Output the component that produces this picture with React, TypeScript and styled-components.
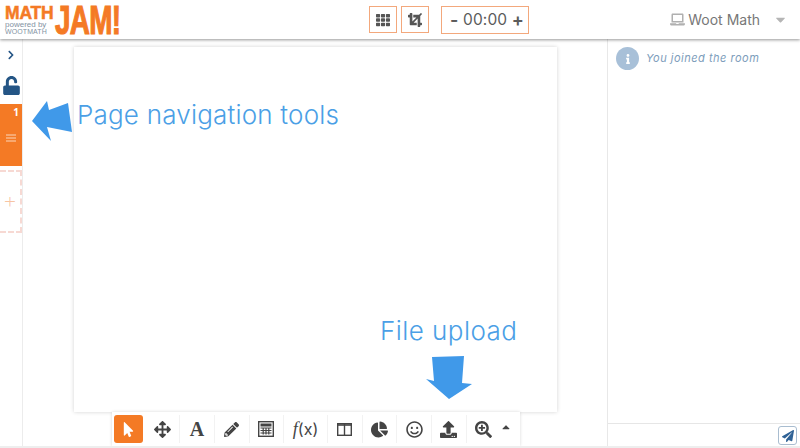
import React from "react";
import styled, { createGlobalStyle } from "styled-components";
import {
  FaArrowsAlt, FaCaretDown, FaCaretUp, FaChartPie, FaChevronRight, FaCrop,
  FaInfo, FaLaptop, FaMousePointer, FaPaperPlane, FaPencilAlt, FaRegSmile, FaSearchPlus,
  FaTh, FaUnlock, FaUpload,
} from "react-icons/fa";

const Global = createGlobalStyle`
  html, body { margin: 0; padding: 0; background: #fff; }
  body { font-family: "Inter", "Liberation Sans", sans-serif; overflow: hidden; }
`;

const Shell = styled.div`
  position: relative;
  width: 800px;
  height: 448px;
  display: flex;
  flex-direction: column;
  box-sizing: border-box;
  overflow: hidden;
  background: #fff;
  border-bottom: 2px solid #eeeeee;
`;

const Header = styled.header`
  position: relative;
  z-index: 3;
  flex: 0 0 39px;
  min-height: 0;
  height: 39px;
  display: flex;
  align-items: flex-start;
  background: #fff;
  box-shadow: 0 1px 3px rgba(0, 0, 0, 0.42);
`;

const Logo = styled.div`
  flex: 0 0 369px;
  height: 39px;
  display: flex;
  align-items: flex-start;
  box-sizing: border-box;
  padding: 5px 0 0 5px;
  color: #f47a25;
`;

const LogoLeft = styled.div`
  display: flex;
  flex-direction: column;
  width: 50px;
`;

const LogoMath = styled.span`
  font: 900 17.5px/15px "Liberation Sans", sans-serif;
  letter-spacing: -0.2px;
  margin-top: 1px;
  -webkit-text-stroke: 0.5px #f47a25;
`;

const LogoPowered = styled.span`
  font: 400 8px/7px "Liberation Sans", sans-serif;
  height: 7px;
  color: #8493a3;
`;

const LogoMaker = styled.span`
  font: 400 7px/7px "Liberation Sans", sans-serif;
  height: 7px;
  color: #8493a3;
  letter-spacing: 0.1px;
`;

const LogoJam = styled.span`
  display: block;
  font: 900 41px/47px "Liberation Sans", sans-serif;
  letter-spacing: -1px;
  margin-top: -8.5px;
  transform: scaleX(0.68);
  transform-origin: left top;
  white-space: nowrap;
  -webkit-text-stroke: 1.2px #f47a25;
`;

const Center = styled.div`
  flex: 0 0 auto;
  display: flex;
  align-items: flex-start;
  padding-top: 6px;
`;

const OutlineButton = styled.button<{ $gap: number }>`
  display: flex;
  align-items: center;
  justify-content: center;
  box-sizing: border-box;
  width: 28px;
  height: 27px;
  margin-right: ${(p) => p.$gap}px;
  padding: 0;
  background: #fff;
  border: 1px solid #f3a87c;
  color: #555;
  font-size: 14px;
`;

const Timer = styled.div`
  display: flex;
  align-items: center;
  justify-content: space-between;
  box-sizing: border-box;
  width: 88px;
  height: 28px;
  padding: 0 4px 0 8px;
  border: 1px solid #f3a87c;
  color: #5b5b5b;
  font: 400 15.5px/1 "Inter", sans-serif;
  letter-spacing: 0.1px;
`;

const TimerSign = styled.span`
  font-weight: 600;
  font-size: 18px;
`;

const User = styled.div`
  margin-left: auto;
  display: flex;
  align-items: center;
  height: 39px;
  padding-right: 12px;
  color: #777;
  font: 400 14px/1 "Inter", sans-serif;
`;

const UserLaptop = styled.span`
  display: flex;
  color: #b0b0b0;
  font-size: 15px;
  margin-right: 3px;
`;

const UserCaret = styled.span`
  display: flex;
  color: #b5b5b5;
  font-size: 15px;
  margin-left: 13px;
`;

const Body = styled.div`
  flex: 1;
  display: flex;
  min-height: 0;
`;

const Rail = styled.aside`
  flex: 0 0 22px;
  display: flex;
  flex-direction: column;
  align-items: stretch;
  border-right: 1px solid #ececec;
`;

const RailToggle = styled.div`
  display: flex;
  justify-content: center;
  padding-top: 11px;
  height: 26px;
  color: #245585;
  font-size: 10px;
`;

const RailLock = styled.div`
  display: flex;
  justify-content: center;
  height: 28px;
  color: #245585;
  font-size: 19px;
`;

const PageThumb = styled.div`
  position: relative;
  height: 62px;
  background: #f47a25;
  display: flex;
  align-items: center;
  justify-content: center;
  box-sizing: border-box;
  color: #fff;
`;

const PageNumber = styled.span`
  position: absolute;
  top: 2px;
  right: 3px;
  font: 700 10px/12px "Open Sans", sans-serif;
`;

const Lines = styled.svg`
  width: 10px;
  height: 8px;
  margin-top: 5px;
`;

const AddPage = styled.div`
  margin-top: 4px;
  height: 63px;
  box-sizing: border-box;
  border: 2px dashed #f7d9d3;
  border-left: none;
  display: flex;
  align-items: center;
  justify-content: center;
  color: #f7c4a3;
  font: 300 21px/1 "Open Sans", sans-serif;
`;

const Stage = styled.main`
  flex: 1;
  display: flex;
  flex-direction: column;
  align-items: flex-start;
  min-width: 0;
`;

const Page = styled.section`
  flex: 1;
  width: 483px;
  margin: 8px 0 0 51px;
  background: #fff;
  box-shadow: 0 0 4px rgba(0, 0, 0, 0.18);
`;

const Toolbar = styled.nav`
  position: relative;
  flex: 0 0 34px;
  display: flex;
  align-items: center;
  box-sizing: border-box;
  margin-left: 89px;
  width: 408px;
  padding-left: 2px;
  background: #fff;
  box-shadow: 0 0 3px rgba(0, 0, 0, 0.16);
  color: #444;
`;

const Tool = styled.button<{ $active?: boolean; $wide?: boolean; $last?: boolean }>`
  flex: 0 0 ${(p) => (p.$active ? "29px" : p.$wide ? "43.6px" : "34.7px")};
  height: 28px;
  margin-right: ${(p) => (p.$active ? "2.5px" : "0")};
  padding: 0;
  display: flex;
  align-items: center;
  justify-content: center;
  font-size: 17px;
  border: none;
  border-right: ${(p) => (p.$active || p.$last ? "none" : "1px solid #f2f2f2")};
  border-radius: ${(p) => (p.$active ? "3px" : "0")};
  background: ${(p) => (p.$active ? "#f47a25" : "#fff")};
  color: ${(p) => (p.$active ? "#fff" : "#444")};
`;

const SerifGlyph = styled.span`
  font: 700 20px/1 "Liberation Serif", serif;
  color: #444;
`;

const FxLabel = styled.span`
  font: 400 16px/1 "Inter", sans-serif;
  color: #444;
`;

const FxItalic = styled.i`
  font: italic 400 18px/1 "Liberation Serif", serif;
`;

const Caret = styled.span`
  display: flex;
  font-size: 12px;
  margin: -4px 0 0 -1px;
  color: #444;
`;

const Chat = styled.aside`
  flex: 0 0 193px;
  display: flex;
  flex-direction: column;
  border-left: 1px solid #e8e8e8;
  box-sizing: border-box;
`;

const ChatLog = styled.div`
  flex: 1;
  padding: 8px 0 0 8px;
`;

const Notice = styled.div`
  display: flex;
  align-items: center;
  gap: 7px;
  color: #7d9dbb;
  font: italic 400 11px/1 "Inter", sans-serif;
  letter-spacing: 0.5px;
`;

const InfoDot = styled.span`
  display: flex;
  align-items: center;
  justify-content: center;
  width: 23px;
  height: 23px;
  border-radius: 50%;
  background: #a8c0d8;
  color: #fff;
  font-size: 10px;
`;

const Composer = styled.div`
  flex: 0 0 23px;
  display: flex;
  box-sizing: border-box;
  justify-content: flex-end;
  align-items: flex-start;
  padding: 2px 3px 0 0;
  border-top: 1px solid #e6e6e6;
`;

const Send = styled.button`
  display: flex;
  align-items: center;
  justify-content: center;
  box-sizing: border-box;
  width: 19px;
  height: 19px;
  padding: 0;
  background: #fff;
  border: 1.5px solid #a9bdd0;
  border-radius: 3px;
  color: #2f6296;
  font-size: 12px;
`;

const Callout = styled.span<{ $x: number; $y: number; $track: number }>`
  position: absolute;
  left: ${(p) => p.$x}px;
  top: ${(p) => p.$y}px;
  color: #4b9fe6;
  font: 300 26px/32px "Inter", sans-serif;
  letter-spacing: ${(p) => p.$track}px;
  white-space: nowrap;
  z-index: 4;
`;

const CalloutArrow = styled.svg<{ $x: number; $y: number }>`
  position: absolute;
  left: ${(p) => p.$x}px;
  top: ${(p) => p.$y}px;
  z-index: 4;
`;

const CalcIcon = () => (
  <svg width="16" height="16" viewBox="0 0 16 16">
    <rect x="0.7" y="0.7" width="14.6" height="14.6" fill="none" stroke="#444" strokeWidth="1.4" />
    <rect x="2.5" y="2.5" width="11" height="3" fill="#444" />
    <path d="M2.5 7h11M2.5 9.5h11M2.5 12h11M5.2 7v6.5M8 7v6.5M10.8 7v6.5" stroke="#444" strokeWidth="1.2" />
  </svg>
);

const SplitIcon = () => (
  <svg width="15" height="13" viewBox="0 0 15 13">
    <rect x="0.7" y="0.7" width="13.6" height="11.6" fill="none" stroke="#444" strokeWidth="1.4" />
    <path d="M0 2h15" stroke="#444" strokeWidth="1.6" />
    <path d="M7.5 1v11" stroke="#444" strokeWidth="1.4" />
  </svg>
);

export default function App() {
  return (
    <Shell>
      <Global />
      <Header>
        <Logo>
          <LogoLeft>
            <LogoMath>MATH</LogoMath>
            <LogoPowered>powered by</LogoPowered>
            <LogoMaker>WOOTMATH</LogoMaker>
          </LogoLeft>
          <LogoJam>JAM!</LogoJam>
        </Logo>
        <Center>
          <OutlineButton $gap={4}><FaTh /></OutlineButton>
          <OutlineButton $gap={12}><FaCrop /></OutlineButton>
          <Timer>
            <TimerSign>-</TimerSign>
            <span>00:00</span>
            <TimerSign>+</TimerSign>
          </Timer>
        </Center>
        <User>
          <UserLaptop><FaLaptop /></UserLaptop>
          Woot Math
          <UserCaret><FaCaretDown /></UserCaret>
        </User>
      </Header>
      <Body>
        <Rail>
          <RailToggle><FaChevronRight /></RailToggle>
          <RailLock><FaUnlock /></RailLock>
          <PageThumb>
            <PageNumber>1</PageNumber>
            <Lines viewBox="0 0 10 8">
              <path d="M0 1h10M0 4h10M0 7h10" stroke="#fbd6bb" strokeWidth="1" />
            </Lines>
          </PageThumb>
          <AddPage>+</AddPage>
        </Rail>
        <Stage>
          <Page />
          <Toolbar>
            <Tool $active><FaMousePointer size={15} /></Tool>
            <Tool><FaArrowsAlt /></Tool>
            <Tool><SerifGlyph>A</SerifGlyph></Tool>
            <Tool><FaPencilAlt size={15} /></Tool>
            <Tool><CalcIcon /></Tool>
            <Tool $wide><FxLabel><FxItalic>f</FxItalic>(x)</FxLabel></Tool>
            <Tool><SplitIcon /></Tool>
            <Tool><FaChartPie /></Tool>
            <Tool><FaRegSmile /></Tool>
            <Tool><FaUpload /></Tool>
            <Tool $last><FaSearchPlus /></Tool>
            <Caret><FaCaretUp /></Caret>
          </Toolbar>
        </Stage>
        <Chat>
          <ChatLog>
            <Notice>
              <InfoDot><FaInfo /></InfoDot>
              You joined the room
            </Notice>
          </ChatLog>
          <Composer>
            <Send><FaPaperPlane /></Send>
          </Composer>
        </Chat>
      </Body>
      <Callout $x={77} $y={99} $track={0.2}>Page navigation tools</Callout>
      <Callout $x={380} $y={315} $track={0.45}>File upload</Callout>
      <CalloutArrow $x={30} $y={98} width="44" height="46" viewBox="0 0 44 46">
        <path d="M2 23 L17 3 L19 12 L38 5 L42 34 L17 29 L21 43 Z" fill="#4099e9" />
      </CalloutArrow>
      <CalloutArrow $x={424} $y={354} width="50" height="46" viewBox="0 0 50 46">
        <path d="M8 3 L40 2 L38 29 L48 30 L25 45 L2 25 L10 27 Z" fill="#4099e9" />
      </CalloutArrow>
    </Shell>
  );
}
